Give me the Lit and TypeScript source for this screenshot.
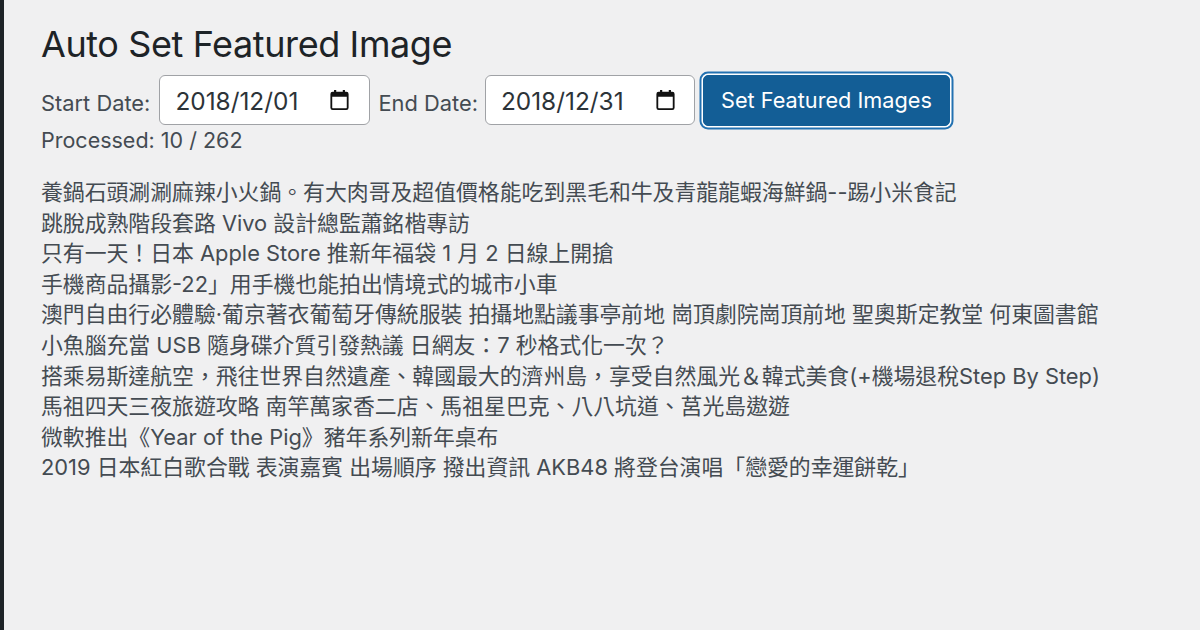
import {LitElement, html, css} from 'lit';
import {customElement} from 'lit/decorators.js';

const TITLES = [
  '養鍋石頭涮涮麻辣小火鍋。有大肉哥及超值價格能吃到黑毛和牛及青龍龍蝦海鮮鍋--踢小米食記',
  '跳脫成熟階段套路 Vivo 設計總監蕭銘楷專訪',
  '只有一天！日本 Apple Store 推新年福袋 1 月 2 日線上開搶',
  '手機商品攝影-22」用手機也能拍出情境式的城市小車',
  '澳門自由行必體驗·葡京著衣葡萄牙傳統服裝 拍攝地點議事亭前地 崗頂劇院崗頂前地 聖奧斯定教堂 何東圖書館',
  '小魚腦充當 USB 隨身碟介質引發熱議 日網友：7 秒格式化一次？',
  '搭乘易斯達航空，飛往世界自然遺產、韓國最大的濟州島，享受自然風光＆韓式美食(+機場退稅Step By Step)',
  '馬祖四天三夜旅遊攻略 南竿萬家香二店、馬祖星巴克、八八坑道、莒光島遨遊',
  '微軟推出《Year of the Pig》豬年系列新年桌布',
  '2019 日本紅白歌合戰 表演嘉賓 出場順序 撥出資訊 AKB48 將登台演唱「戀愛的幸運餅乾」',
];

@customElement('app-root')
export class AppRoot extends LitElement {
  static styles = css`
    :host {
      display: block;
      height: 630px;
      overflow: hidden;
      background: #f0f0f1;
      font-family: Inter, 'Noto Sans CJK TC', sans-serif;
      font-size: 21.85px;
      color: #444b52;
    }
    .page {
      height: 630px;
      box-sizing: border-box;
      border-left: 4px solid #1d2327;
      padding: 23px 0 0 37px;
    }
    h1 {
      margin: 0 0 9px;
      font-size: 36px;
      line-height: 42px;
      font-weight: 400;
      letter-spacing: -0.4px;
      color: #1d2327;
    }
    .controls {
      display: flex;
      align-items: center;
      height: 52px;
    }
    .date {
      display: flex;
      align-items: center;
      justify-content: space-between;
      box-sizing: border-box;
      width: 211px;
      height: 50px;
      margin: 0 8px 0 9px;
      padding: 0 20px 0 15px;
      background: #fff;
      border: 1px solid #a0a2a6;
      border-radius: 6px;
      font-size: 24.4px;
      color: #2c3338;
    }
    .date span { padding-top: 2px; }
    .date.end {
      width: 210px;
      margin-left: 7px;
      padding-right: 19px;
    }
    .label { padding-top: 5px; }
    .btn {
      box-sizing: border-box;
      width: 247px;
      height: 51px;
      border: 1px solid #135e96;
      border-radius: 5px;
      background: #135e96;
      color: #fff;
      font: inherit;
      font-size: 21.7px;
      box-shadow: 0 0 0 1.5px #fff, 0 0 0 3.5px #2271b1;
    }
    .progress { margin-top: -1px; line-height: 30px; font-size: 21.5px; }
    .list { margin-top: 22px; }
    .list div { line-height: 30.6px; white-space: nowrap; }
  `;

  calendar() {
    return html`<svg width="19" height="20" viewBox="0 0 20 22">
      <path fill="#111" d="M4 0h2.4v2h7.2V0H16v2h1.5A2.5 2.5 0 0 1 20 4.5v15a2.5 2.5 0 0 1-2.5 2.5h-15A2.5 2.5 0 0 1 0 19.5v-15A2.5 2.5 0 0 1 2.5 2H4zM2 7.5v12c0 .3.2.5.5.5h15c.3 0 .5-.2.5-.5v-12z"/>
    </svg>`;
  }

  render() {
    return html`
      <div class="page" lang="zh-TW">
        <h1>Auto Set Featured Image</h1>
        <div class="controls">
          <span class="label">Start Date:</span>
          <div class="date"><span>2018/12/01</span>${this.calendar()}</div>
          <span class="label">End Date:</span>
          <div class="date end"><span>2018/12/31</span>${this.calendar()}</div>
          <button class="btn">Set Featured Images</button>
        </div>
        <div class="progress">Processed: 10 / 262</div>
        <div class="list">${TITLES.map((t) => html`<div>${t}</div>`)}</div>
      </div>
    `;
  }
}
